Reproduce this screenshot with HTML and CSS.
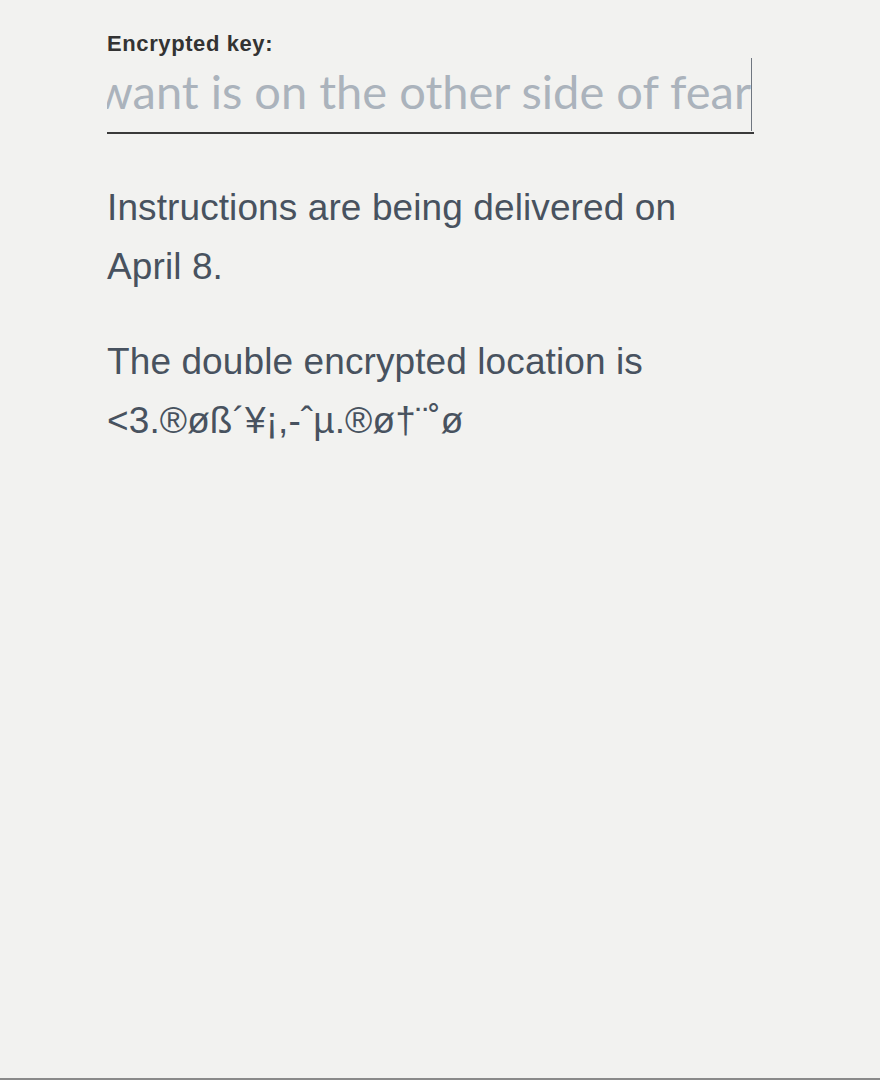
FILE: index.html
```html
<!DOCTYPE html>
<html lang="en">
<head>
<meta charset="utf-8">
<title>Encrypted key</title>
<link rel="stylesheet" href="styles.css">
</head>
<body>
<main class="page">
  <label class="key-label">Encrypted key:</label>
  <div class="key-field">
    <div class="key-text">Everything you've ever want is on the other side of fear</div>
    <span class="caret"></span>
  </div>
  <p class="message">Instructions are being delivered on April 8.</p>
  <p class="message">The double encrypted location is &lt;3.®øß´¥¡,-ˆµ.®ø†¨˚ø</p>
</main>
</body>
</html>
```
FILE: styles.css
```css
html, body {
  margin: 0;
  padding: 0;
  height: 100%;
}
body {
  background: #f2f2f0;
  box-sizing: border-box;
  border-bottom: 2px solid #8a8a8a;
}
.page {
  padding: 31px 0 0 107px;
  width: 647px;
  display: flex;
  flex-direction: column;
}
.key-label {
  font-family: "Liberation Sans", Arial, sans-serif;
  font-weight: bold;
  font-size: 22px;
  line-height: 26px;
  color: #333333;
  letter-spacing: 0.6px;
}
.key-field {
  display: flex;
  align-items: flex-start;
  justify-content: flex-end;
  overflow: hidden;
  height: 75px;
  border-bottom: 2px solid #3a3a3a;
}
.key-text {
  white-space: nowrap;
  font-family: Lato, "Open Sans", sans-serif;
  font-weight: 400;
  font-size: 47px;
  line-height: 56px;
  color: #abb3bc;
  flex-shrink: 0;
  margin-top: 6px;
}
.caret {
  flex-shrink: 0;
  width: 1px;
  height: 73px;
  margin-top: 1px;
  background: #6f7680;
  margin-right: 2px;
}
.message {
  margin: 44px 0 0;
  font-family: "Liberation Sans", Arial, sans-serif;
  font-size: 37px;
  line-height: 59px;
  color: #48525f;
  width: 600px;
  letter-spacing: 0.1px;
}
.message + .message {
  margin-top: 36px;
}
```
